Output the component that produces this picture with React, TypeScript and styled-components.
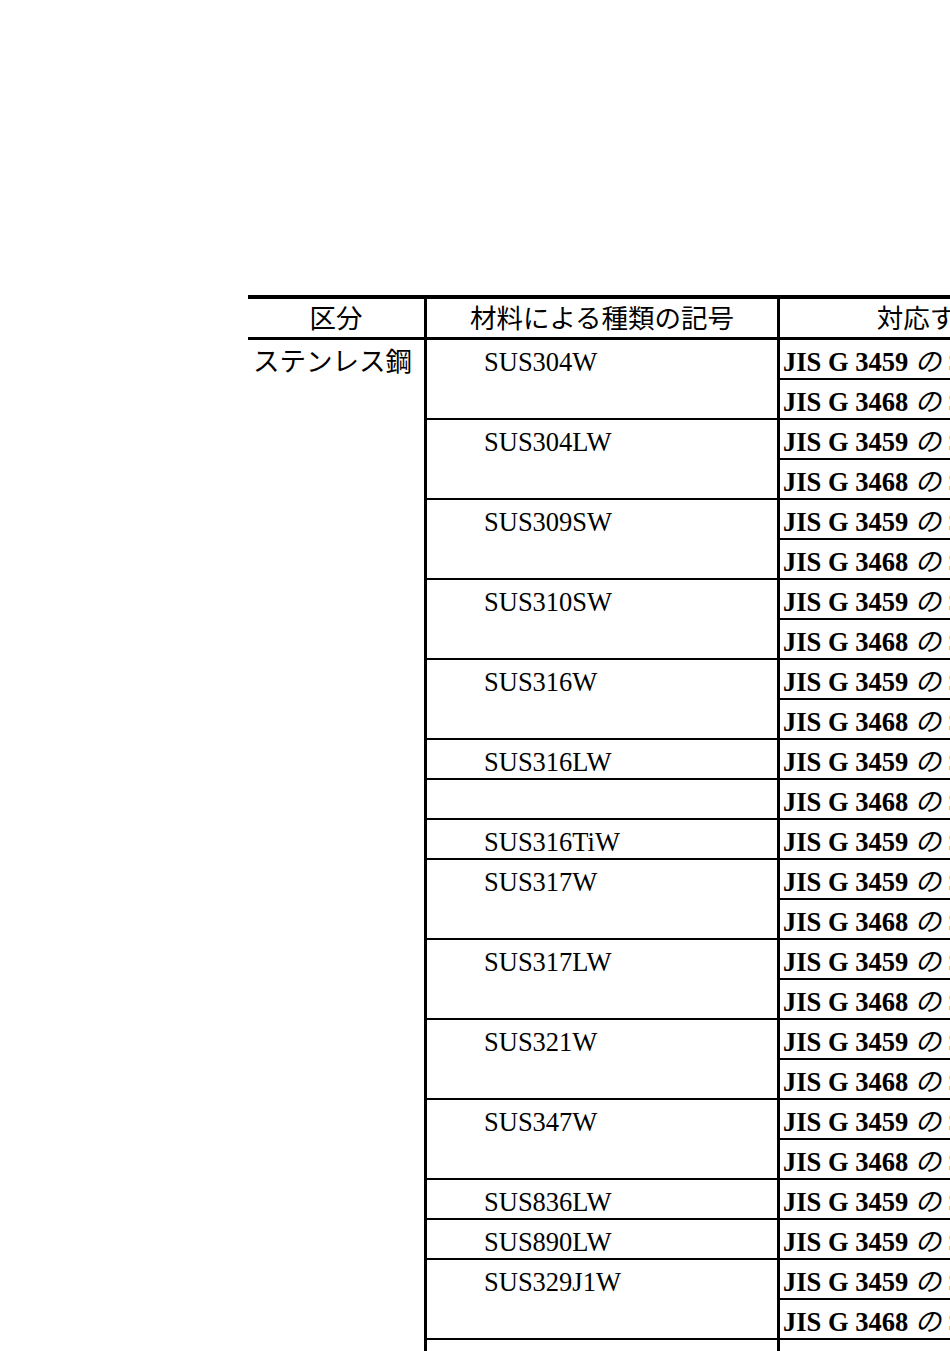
import React from "react";
import styled, { createGlobalStyle } from "styled-components";

const GlobalStyle = createGlobalStyle`
  *, *::before, *::after {
    box-sizing: border-box;
  }
  html, body {
    margin: 0;
    padding: 0;
    overflow: hidden;
    background: #ffffff;
  }
  body {
    font-family: "Liberation Serif", "Noto Sans CJK JP", serif;
    color: #000000;
  }
`;

const Page = styled.div`
  padding: 295px 0 0 248px;
  width: 1400px;
`;

const Table = styled.table`
  border-collapse: separate;
  border-spacing: 0;
  table-layout: fixed;
  width: 1070px;
  font-size: 26.5px;
`;

const HeadCell = styled.th<{ $w: number; $divider?: boolean }>`
  width: ${(p) => p.$w}px;
  height: 43px;
  padding: 2px 0 0 0;
  border-top: 4px solid #000;
  border-bottom: 1px solid #000;
  border-left: ${(p) => (p.$divider ? "3px solid #000" : "none")};
  font-weight: normal;
  line-height: 36px;
  text-align: center;
  white-space: nowrap;
  overflow: hidden;
`;

const KindCell = styled.td`
  vertical-align: top;
  padding: 6px 0 0 5px;
  border-top: 2px solid #000;
  line-height: 32px;
  white-space: nowrap;
`;

const SymbolCell = styled.td`
  vertical-align: top;
  padding: 6px 0 0 57px;
  border-top: 2px solid #000;
  border-left: 3px solid #000;
  line-height: 32px;
  height: 40px;
  white-space: nowrap;
`;

const StandardCell = styled.td`
  vertical-align: top;
  padding: 6px 0 0 3px;
  border-top: 2px solid #000;
  border-left: 3px solid #000;
  line-height: 32px;
  height: 40px;
  white-space: nowrap;
  overflow: hidden;
`;

const Code = styled.b`
  font-weight: bold;
`;

const No = styled.span`
  font-style: italic;
`;

type Group = { symbol: string; specs: string[]; tube: string };

const groups: Group[] = [
  { symbol: "SUS304W", specs: ["3459", "3468"], tube: "SUS304" },
  { symbol: "SUS304LW", specs: ["3459", "3468"], tube: "SUS304L" },
  { symbol: "SUS309SW", specs: ["3459", "3468"], tube: "SUS309S" },
  { symbol: "SUS310SW", specs: ["3459", "3468"], tube: "SUS310S" },
  { symbol: "SUS316W", specs: ["3459", "3468"], tube: "SUS316" },
  { symbol: "SUS316LW", specs: ["3459"], tube: "SUS316L" },
  { symbol: "", specs: ["3468"], tube: "SUS316L" },
  { symbol: "SUS316TiW", specs: ["3459"], tube: "SUS316Ti" },
  { symbol: "SUS317W", specs: ["3459", "3468"], tube: "SUS317" },
  { symbol: "SUS317LW", specs: ["3459", "3468"], tube: "SUS317L" },
  { symbol: "SUS321W", specs: ["3459", "3468"], tube: "SUS321" },
  { symbol: "SUS347W", specs: ["3459", "3468"], tube: "SUS347" },
  { symbol: "SUS836LW", specs: ["3459"], tube: "SUS836L" },
  { symbol: "SUS890LW", specs: ["3459"], tube: "SUS890L" },
  { symbol: "SUS329J1W", specs: ["3459", "3468"], tube: "SUS329J1" },
  { symbol: "SUS329J3LW", specs: ["3459", "3468"], tube: "SUS329J3L" },
];

const totalRows = groups.reduce((n, g) => n + g.specs.length, 0);

const Standard = ({ spec, tube }: { spec: string; tube: string }) => (
  <StandardCell>
    <Code>JIS G {spec}</Code> <No>の</No> {tube}
    {spec === "3459" ? "TP" : "TPY"}
  </StandardCell>
);

export default function App() {
  return (
    <Page>
      <GlobalStyle />
      <Table>
        <thead>
          <tr>
            <HeadCell $w={176}>区分</HeadCell>
            <HeadCell $w={353} $divider>
              材料による種類の記号
            </HeadCell>
            <HeadCell $w={541} $divider>
              対応する規格及び種類の記号
            </HeadCell>
          </tr>
        </thead>
        <tbody>
          {groups.map((g, gi) =>
            g.specs.map((spec, si) => (
              <tr key={`${gi}-${si}`}>
                {gi === 0 && si === 0 && (
                  <KindCell rowSpan={totalRows}>ステンレス鋼</KindCell>
                )}
                {si === 0 && (
                  <SymbolCell rowSpan={g.specs.length}>{g.symbol}</SymbolCell>
                )}
                <Standard spec={spec} tube={g.tube} />
              </tr>
            ))
          )}
        </tbody>
      </Table>
    </Page>
  );
}
